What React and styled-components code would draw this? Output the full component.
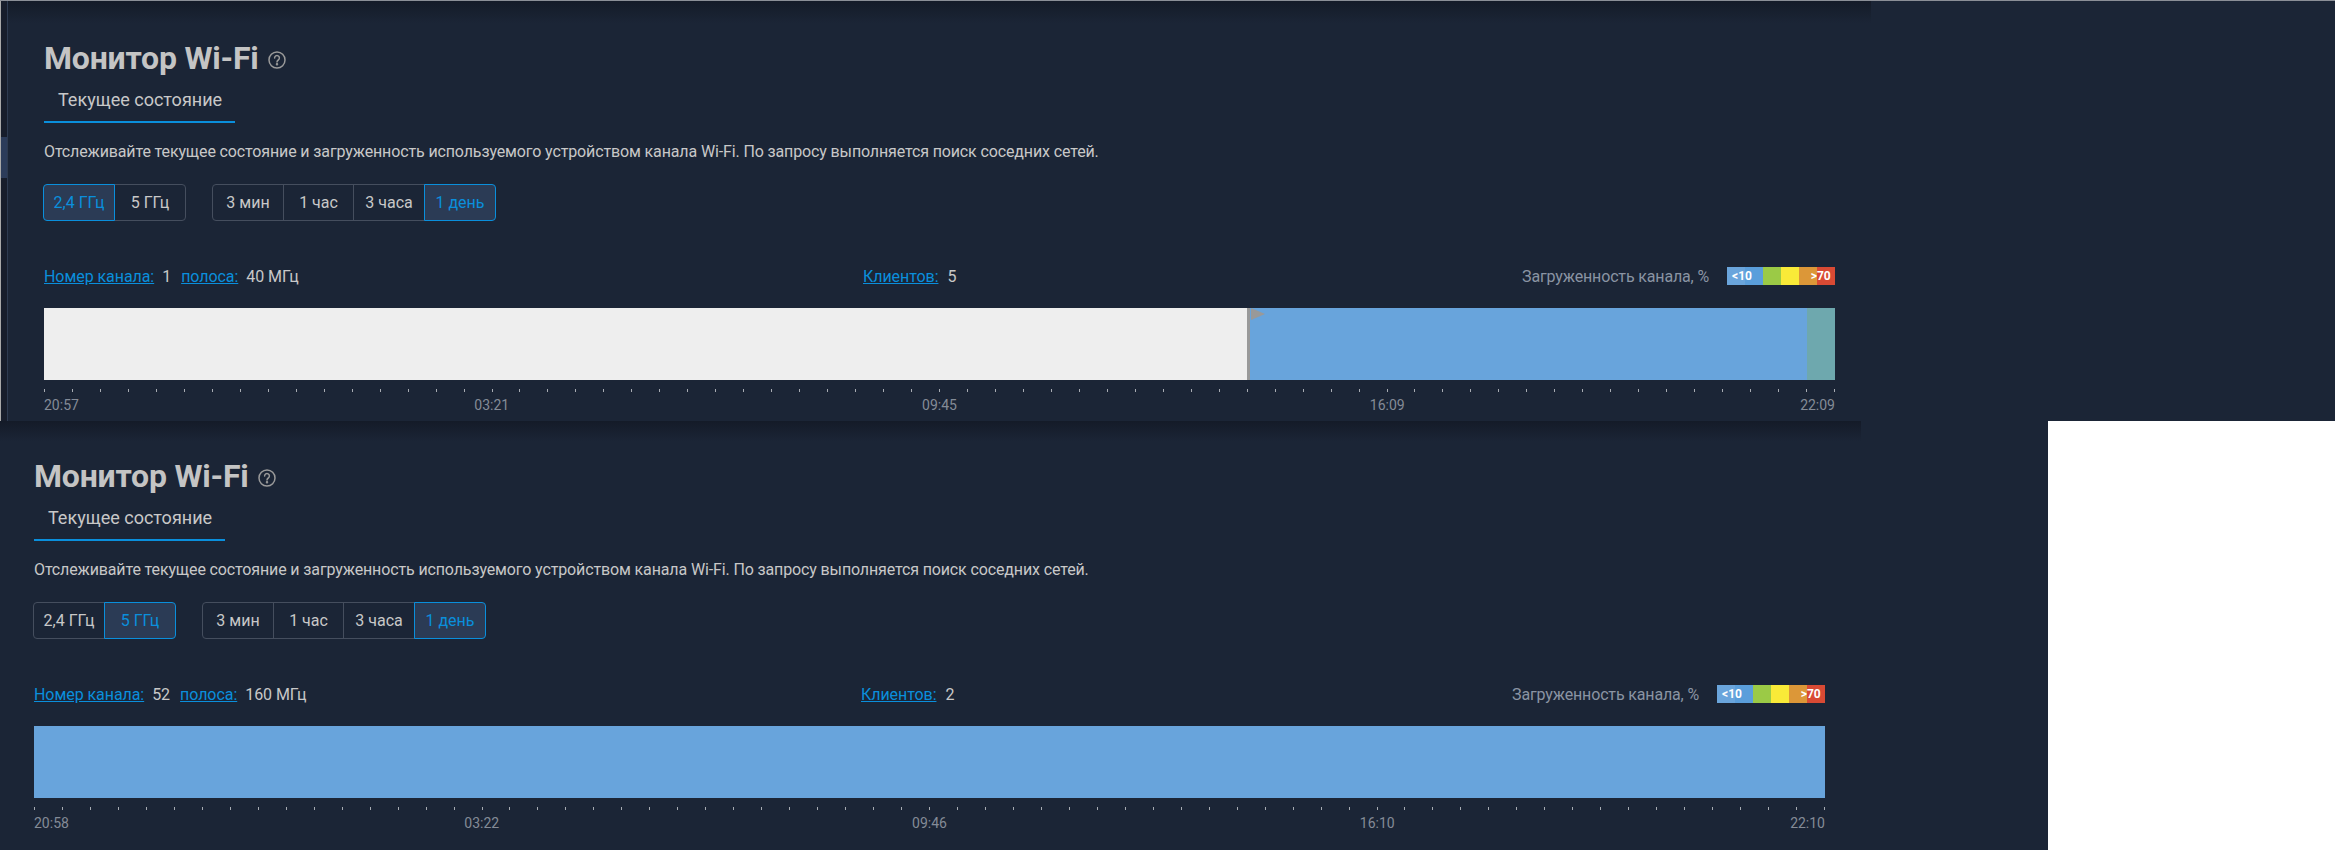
import React from "react";
import styled, { createGlobalStyle } from "styled-components";

const Global = createGlobalStyle`
  html, body { margin: 0; padding: 0; background: #fff; }
  #root { width: 2335px; height: 850px; overflow: hidden; }
  * { box-sizing: border-box; }
`;

const Page = styled.div`
  width: 2335px;
  height: 850px;
  background: #1b2536;
  font-family: Roboto, "Liberation Sans", sans-serif;
  display: flex;
  flex-direction: column;
`;

const TopFrame = styled.div`
  height: 421px;
  display: flex;
  border-top: 1px solid #8b8f97;
  position: relative;
  z-index: 1;
  background: linear-gradient(180deg, #141b28 0, #1b2536 22px);
  background-size: 1871px 100%;
  background-repeat: no-repeat;
`;

const SideRail = styled.div`
  width: 8px;
  flex: none;
  background: #171d2b;
  border-left: 1px solid #a8a8a8;
  border-right: 1px solid #2d3a50;
  padding-top: 136px;
`;

const RailThumb = styled.div`
  height: 41px;
  background: #2c3c5a;
`;

const FrameShadow = styled.div`
  height: 20px;
  width: 1861px;
  margin-bottom: -20px;
  background: linear-gradient(180deg, #141b28, #1b2536);
`;

const BottomRow = styled.div`
  flex: 1;
  display: flex;
`;

const BottomPanel = styled.div`
  width: 2048px;
  flex: none;
  display: flex;
  flex-direction: column;
`;

const WhiteBlock = styled.div`
  flex: 1;
  background: #fff;
`;

const Monitor = styled.section`
  width: 1860px;
  padding: ${(p) => p.$top}px 0 0 ${(p) => p.$left}px;
`;

const TitleRow = styled.div`
  display: flex;
  align-items: center;
  gap: 8px;
  height: 36px;
`;

const Title = styled.h1`
  margin: 0;
  font-size: 32px;
  letter-spacing: -0.2px;
  line-height: 36px;
  font-weight: 700;
  color: #c4c4c4;
`;

const Tabs = styled.div`
  margin-top: 3px;
  display: flex;
`;

const Tab = styled.div`
  width: 191px;
  height: 44px;
  padding: 9px 0 0 14px;
  font-size: 18px;
  line-height: 24px;
  color: #c8c8c8;
  border-bottom: 2px solid #0a8fdc;
`;

const Description = styled.p`
  margin: 19px 0 0;
  font-size: 16px;
  letter-spacing: -0.13px;
  line-height: 20px;
  color: #c8c8c8;
  white-space: nowrap;
`;

const Controls = styled.div`
  margin-top: 22px;
  margin-left: -1px;
  display: flex;
  gap: 26px;
`;

const Group = styled.div`
  display: flex;
  height: 37px;
`;

const Segment = styled.button`
  width: ${(p) => p.$w}px;
  height: 37px;
  padding: 0;
  font-family: inherit;
  font-size: 16px;
  color: ${(p) => (p.$active ? "#0a8fdc" : "#c8c8c8")};
  background: ${(p) => (p.$active ? "#2b3b55" : "transparent")};
  border: 1px solid ${(p) => (p.$active ? "#0a8fdc" : "#454e5e")};
  margin-left: -1px;
  position: relative;
  z-index: ${(p) => (p.$active ? 1 : 0)};
  &:first-child { margin-left: 0; border-radius: 4px 0 0 4px; }
  &:last-child { border-radius: 0 4px 4px 0; }
`;

const InfoRow = styled.div`
  margin-top: 45px;
  width: 1791px;
  height: 20px;
  display: grid;
  grid-template-columns: ${(p) => p.$first}px 1fr auto;
  align-items: center;
  font-size: 16px;
  letter-spacing: -0.06px;
`;

const InfoGroup = styled.div`
  display: flex;
  align-items: center;
`;

const InfoLink = styled.a`
  color: #0a8fdc;
  text-decoration: underline;
  margin-right: ${(p) => p.$mr || 8}px;
  margin-left: ${(p) => p.$ml || 0}px;
`;

const InfoValue = styled.span`
  color: #c8c8c8;
`;

const LegendWrap = styled.div`
  display: flex;
  align-items: center;
  gap: 18px;
`;

const LegendLabel = styled.span`
  font-size: 16px;
  letter-spacing: -0.15px;
  color: #8a94a3;
`;

const Legend = styled.div`
  display: flex;
  height: 18px;
`;

const LegendCell = styled.div`
  width: 18px;
  height: 18px;
  background: ${(p) => p.$c};
  color: #fff;
  font-size: 12px;
  font-weight: 700;
  line-height: 18px;
  white-space: nowrap;
  display: flex;
  justify-content: ${(p) => p.$j || "flex-start"};
`;

const Chart = styled.div`
  margin-top: 22px;
  width: 1791px;
  height: 72px;
  display: flex;
  position: relative;
`;

const Band = styled.div`
  background: ${(p) => p.$c};
  flex: ${(p) => (p.$w ? `0 0 ${p.$w}px` : "1")};
`;

const Flag = styled.div`
  position: absolute;
  left: 1207px;
  top: 0;
  width: 0;
  height: 0;
  border-top: 6px solid transparent;
  border-bottom: 6px solid transparent;
  border-left: 14px solid #999;
`;

const Ticks = styled.div`
  margin-top: 9px;
  width: 1791px;
  height: 3px;
  display: flex;
  justify-content: space-between;
`;

const Tick = styled.i`
  width: 1px;
  height: 3px;
  background: #a7abb2;
`;

const TimeAxis = styled.div`
  margin-top: 5px;
  width: 1791px;
  display: grid;
  grid-template-columns: repeat(8, 1fr);
  font-size: 14px;
  line-height: 16px;
  color: #848b97;
`;

const TimeLabel = styled.span`
  grid-column: ${(p) => p.$col};
  text-align: ${(p) => p.$align};
`;

const HelpGlyph = styled.svg`
  margin-top: 4px;
  flex: none;
`;

const HelpIcon = () => (
  <HelpGlyph width="20" height="20" viewBox="0 0 20 20" fill="none" stroke="#9a9a9a" strokeWidth="1.5">
    <circle cx="10" cy="10" r="8" />
    <path d="M7.6 8a2.4 2.4 0 1 1 3.7 2c-.9.6-1.3 1-1.3 2" strokeLinecap="round" />
    <circle cx="10" cy="14.3" r="0.5" fill="#9a9a9a" />
  </HelpGlyph>
);

const timeCols = [
  ["1", "left"],
  ["2 / span 2", "center"],
  ["4 / span 2", "center"],
  ["6 / span 2", "center"],
  ["8", "right"],
];

const MonitorBlock = ({ top, left, firstCol, times, channel, strip, clients, segments, flag, active }) => (
  <Monitor $top={top} $left={left}>
    <TitleRow>
      <Title>Монитор Wi-Fi</Title>
      <HelpIcon />
    </TitleRow>
    <Tabs>
      <Tab>Текущее состояние</Tab>
    </Tabs>
    <Description>
      Отслеживайте текущее состояние и загруженность используемого устройством канала Wi-Fi. По запросу выполняется поиск соседних сетей.
    </Description>
    <Controls>
      <Group>
        <Segment $w={72} $active={active === 0}>2,4 ГГц</Segment>
        <Segment $w={72} $active={active === 1}>5 ГГц</Segment>
      </Group>
      <Group>
        <Segment $w={72}>3 мин</Segment>
        <Segment $w={71}>1 час</Segment>
        <Segment $w={72}>3 часа</Segment>
        <Segment $w={72} $active>1 день</Segment>
      </Group>
    </Controls>
    <InfoRow $first={firstCol}>
      <InfoGroup>
        <InfoLink href="#">Номер канала:</InfoLink>
        <InfoValue>{channel}</InfoValue>
        <InfoLink href="#" $ml={10}>полоса:</InfoLink>
        <InfoValue>{strip}</InfoValue>
      </InfoGroup>
      <InfoGroup>
        <InfoLink href="#" $mr={9}>Клиентов:</InfoLink>
        <InfoValue>{clients}</InfoValue>
      </InfoGroup>
      <LegendWrap>
        <LegendLabel>Загруженность канала, %</LegendLabel>
        <Legend>
          <LegendCell $c="#6aa5dc" $j="flex-end">&lt;1</LegendCell>
          <LegendCell $c="#5a9edb">0</LegendCell>
          <LegendCell $c="#9bca46" />
          <LegendCell $c="#f9ea38" />
          <LegendCell $c="#dc9738" $j="flex-end">&gt;</LegendCell>
          <LegendCell $c="#d94a34">70</LegendCell>
        </Legend>
      </LegendWrap>
    </InfoRow>
    <Chart>
      {segments.map(([c, w], i) => (
        <Band key={i} $c={c} $w={w} />
      ))}
      {flag && <Flag />}
    </Chart>
    <Ticks>
      {Array.from({ length: 65 }, (_, i) => (
        <Tick key={i} />
      ))}
    </Ticks>
    <TimeAxis>
      {times.map((t, i) => (
        <TimeLabel key={t} $col={timeCols[i][0]} $align={timeCols[i][1]}>
          {t}
        </TimeLabel>
      ))}
    </TimeAxis>
  </Monitor>
);

export default function App() {
  return (
    <Page>
      <Global />
      <TopFrame>
        <SideRail>
          <RailThumb />
        </SideRail>
        <MonitorBlock
          top={39}
          left={36}
          firstCol={819}
          active={0}
          channel="1"
          strip="40 МГц"
          clients="5"
          flag
          segments={[
            ["#eeeeee", 1203],
            ["#999999", 3],
            ["#68a4dc", 557],
            ["#6ea8ae", 28],
          ]}
          times={["20:57", "03:21", "09:45", "16:09", "22:09"]}
        />
      </TopFrame>
      <BottomRow>
        <BottomPanel>
          <FrameShadow />
          <MonitorBlock
            top={37}
            left={34}
            firstCol={827}
            active={1}
            channel="52"
            strip="160 МГц"
            clients="2"
            segments={[["#68a4dc"]]}
            times={["20:58", "03:22", "09:46", "16:10", "22:10"]}
          />
        </BottomPanel>
        <WhiteBlock />
      </BottomRow>
    </Page>
  );
}
